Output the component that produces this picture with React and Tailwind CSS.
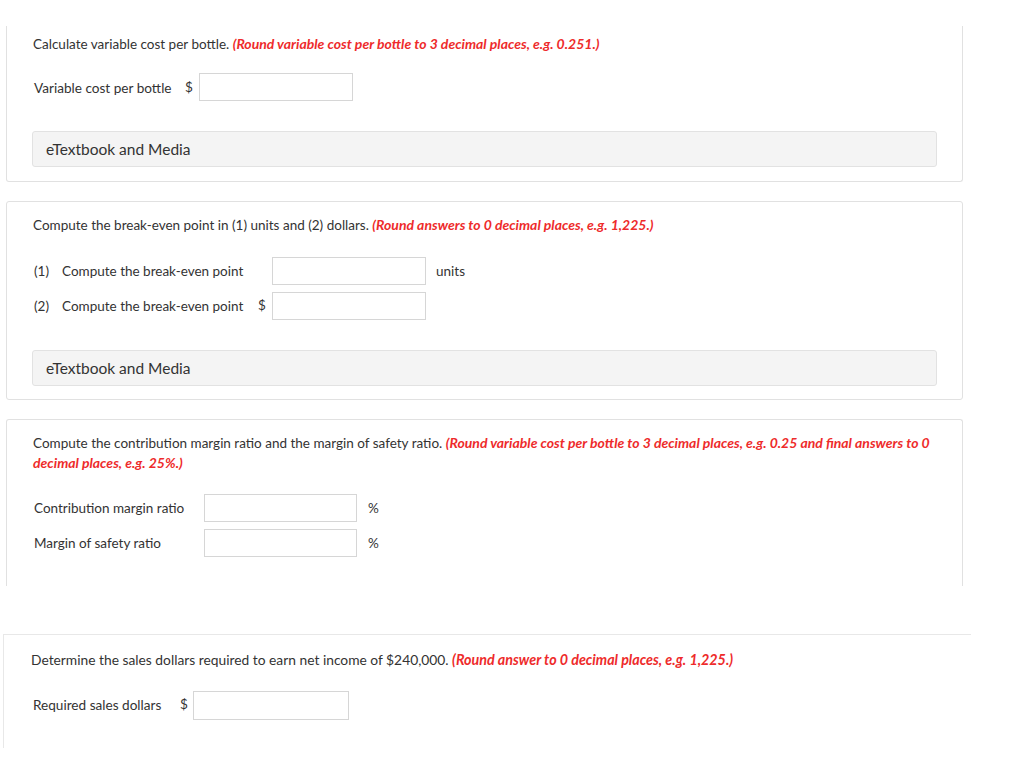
import React from "react";

const font = { fontFamily: "Lato, 'Open Sans', sans-serif" };

function Input({ w = "w-[154px]", h = "h-[28px]" }) {
  return <div className={`${w} ${h} border border-[#d6d6d6] bg-white shrink-0`} />;
}

function Bar() {
  return (
    <div className="h-[36px] rounded-[3px] border border-[#e2e2e2] bg-[#f4f4f4] flex items-center pl-[13px] pt-[2px] text-[15.5px] text-[#333]">
      eTextbook and Media
    </div>
  );
}

const red = "font-bold italic text-[#ee2b2b] text-[14px]";

export default function App() {
  return (
    <div className="w-[1024px] h-[758px] bg-white overflow-hidden pt-[26px] text-[#333]" style={font}>
      {/* Panel 1 */}
      <div className="ml-[6px] w-[957px] border-x border-b border-[#e1e1e1] rounded-b-[3px] px-[25px] pt-[9px] pb-[14px]">
        <div className="text-[13.5px] leading-[18px] pl-[1px]">
          Calculate variable cost per bottle.{" "}
          <span className={red}>
            (Round variable cost per bottle to 3 decimal places, e.g. 0.251.)
          </span>
        </div>
        <div className="mt-[20px] flex items-center text-[13.6px]">
          <span className="w-[151px] pl-[2px] mt-[2px]">Variable cost per bottle</span>
          <span className="w-[16px] pl-[2px]">$</span>
          <Input />
        </div>
        <div className="mt-[30px]">
          <Bar />
        </div>
      </div>

      {/* Panel 2 */}
      <div className="mt-[19px] ml-[6px] w-[957px] border border-[#e1e1e1] rounded-[3px] px-[25px] pt-[14px] pb-[13px]">
        <div className="text-[13.5px] leading-[18px] pl-[1px]">
          Compute the break-even point in (1) units and (2) dollars.{" "}
          <span className={red}>
            (Round answers to 0 decimal places, e.g. 1,225.)
          </span>
        </div>
        <div className="mt-[23px] flex flex-col gap-[7px] text-[13.5px]">
          <div className="flex items-center">
            <span className="w-[30px] pl-[2px]">(1)</span>
            <span className="w-[194px]">Compute the break-even point</span>
            <span className="w-[16px]"></span>
            <Input />
            <span className="ml-[10px]">units</span>
          </div>
          <div className="flex items-center">
            <span className="w-[30px] pl-[2px]">(2)</span>
            <span className="w-[194px]">Compute the break-even point</span>
            <span className="w-[16px] pl-[2px] -mt-[2px]">$</span>
            <Input />
          </div>
        </div>
        <div className="mt-[30px]">
          <Bar />
        </div>
      </div>

      {/* Panel 3 */}
      <div className="mt-[19px] ml-[6px] w-[957px] border-x border-t border-[#e1e1e1] rounded-t-[3px] px-[25px] pt-[13px] pb-[29px]">
        <div className="text-[13.5px] leading-[20px] pl-[1px]">
          Compute the contribution margin ratio and the margin of safety ratio.{" "}
          <span className={red}>
            (Round variable cost per bottle to 3 decimal places, e.g. 0.25 and final answers to 0 decimal places, e.g. 25%.)
          </span>
        </div>
        <div className="mt-[21px] flex flex-col gap-[7px] text-[13.5px]">
          <div className="flex items-center">
            <span className="w-[172px] pl-[2px]">Contribution margin ratio</span>
            <Input w="w-[153px]" />
            <span className="ml-[11px]">%</span>
          </div>
          <div className="flex items-center">
            <span className="w-[172px] pl-[2px]">Margin of safety ratio</span>
            <Input w="w-[153px]" />
            <span className="ml-[11px]">%</span>
          </div>
        </div>
      </div>

      {/* Panel 4 */}
      <div className="mt-[48px] ml-[3px] w-[968px] border-t border-l border-[#e8e8e8] pl-[27px] pt-[15px] pb-[28px]">
        <div className="text-[13.8px] leading-[20px]">
          Determine the sales dollars required to earn net income of $240,000.{" "}
          <span className="font-bold italic text-[#ee2b2b] text-[14.3px]">
            (Round answer to 0 decimal places, e.g. 1,225.)
          </span>
        </div>
        <div className="mt-[21px] flex items-center text-[13.6px]">
          <span className="w-[146px] pl-[2px]">Required sales dollars</span>
          <span className="w-[16px] pl-[3px] -mt-[2px]">$</span>
          <Input w="w-[156px]" h="h-[29px]" />
        </div>
      </div>
    </div>
  );
}
